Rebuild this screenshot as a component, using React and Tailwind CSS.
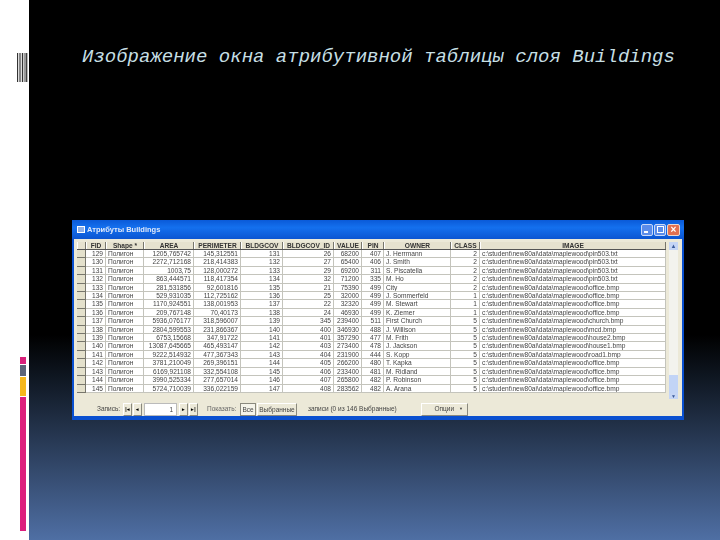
const rows = [
  [129, "1205,765742", "145,312551", 131, 26, 68200, 407, "J. Herrmann", 2, "pin503.txt"],
  [130, "2272,712168", "218,414383", 132, 27, 65400, 406, "J. Smith", 2, "pin503.txt"],
  [131, "1003,75", "128,000272", 133, 29, 69200, 311, "S. Piscatella", 2, "pin503.txt"],
  [132, "863,444571", "118,417354", 134, 32, 71200, 335, "M. Ho", 2, "pin503.txt"],
  [133, "281,531856", "92,601816", 135, 21, 75390, 499, "City", 2, "office.bmp"],
  [134, "529,931035", "112,725162", 136, 25, 32000, 499, "J. Sommerfeld", 1, "office.bmp"],
  [135, "1170,924551", "138,001953", 137, 22, 32320, 499, "M. Stewart", 1, "office.bmp"],
  [136, "209,767148", "70,40173", 138, 24, 46930, 499, "K. Ziemer", 1, "office.bmp"],
  [137, "5936,076177", "318,596007", 139, 345, 239400, 511, "First Church", 5, "church.bmp"],
  [138, "2804,599553", "231,866367", 140, 400, 346930, 488, "J. Willison", 5, "mcd.bmp"],
  [139, "6753,15668", "347,91722", 141, 401, 357290, 477, "M. Frith", 5, "house2.bmp"],
  [140, "13087,645665", "465,493147", 142, 403, 273400, 478, "J. Jackson", 5, "house1.bmp"],
  [141, "9222,514932", "477,367343", 143, 404, 231900, 444, "S. Kopp", 5, "road1.bmp"],
  [142, "3781,210049", "269,396151", 144, 405, 266200, 480, "T. Kapka", 5, "office.bmp"],
  [143, "6169,921108", "332,554108", 145, 406, 233400, 481, "M. Ridland", 5, "office.bmp"],
  [144, "3990,525334", "277,657014", 146, 407, 265800, 482, "P. Robinson", 5, "office.bmp"],
  [145, "5724,710039", "336,022159", 147, 408, 283562, 482, "A. Arana", 5, "office.bmp"],
];

const cols = "grid-cols-[9px_20px_38px_50px_47px_42px_51px_28px_22px_67px_29px_186px]";
const headers = ["", "FID", "Shape *", "AREA", "PERIMETER", "BLDGCOV", "BLDGCOV_ID", "VALUE", "PIN", "OWNER", "CLASS", "IMAGE"];

function Nav({ children }) {
  return (
    <div className="w-[9px] h-[13px] flex items-center justify-center bg-[#ece9d8] border border-t-white border-l-white border-r-[#8a897e] border-b-[#8a897e] text-[5px] font-bold text-black leading-none">
      {children}
    </div>
  );
}

function Cell({ children, left }) {
  return (
    <div className={`border-r border-b border-[#c4c4bc] overflow-hidden whitespace-nowrap px-[2px] leading-[8px] text-[6.6px] text-[#444] ${left ? "text-left" : "text-right"}`}>
      {children}
    </div>
  );
}

export default function App() {
  return (
    <div className="w-[720px] h-[540px] flex overflow-hidden font-['Liberation_Sans',sans-serif]">
      <div className="w-[29px] h-full bg-white flex flex-col items-end pr-[1px] pt-[53px]">
        <div className="w-[11px] h-[29px] flex bg-[#d8d8d8]">
          <div className="w-[1px] bg-[#333]" />
          <div className="w-[1px] bg-[#ddd]" />
          <div className="w-[2px] bg-[#888]" />
          <div className="w-[1px] bg-[#ddd]" />
          <div className="w-[1px] bg-[#333]" />
          <div className="w-[1px] bg-[#ccc]" />
          <div className="w-[2px] bg-[#999]" />
          <div className="w-[1px] bg-[#444]" />
          <div className="w-[1px] bg-[#bbb]" />
        </div>
        <div className="flex flex-col w-[6px] mr-[2px] mt-[275px] gap-[1px]">
          <div className="h-[7px] bg-[#d9217b]" />
          <div className="h-[11px] bg-[#5c6478]" />
          <div className="h-[19px] bg-[#f6b81c]" />
          <div className="h-[134px] bg-[#dd1f7d]" />
        </div>
      </div>

      <div className="w-[691px] h-full flex flex-col bg-[linear-gradient(180deg,#000_0%,#000_62%,#0f1722_70%,#4f6fa4_100%)] pl-[43px]">
        <div className="h-[220px] pt-[45px] pl-[10px]">
          <h1 className="text-[19px] leading-[24px] italic font-normal whitespace-nowrap text-[#c6dfe4] font-['Liberation_Mono',monospace]">
            Изображение окна атрибутивной таблицы слоя Buildings
          </h1>
        </div>

        <div className="w-[612px] h-[200px] flex flex-col bg-[#0a50d0] rounded-t-[2px] blur-[0.45px]">
          <div className="h-[19px] flex items-center pl-[5px] pr-[4px] bg-[linear-gradient(180deg,#0a5ad8_0%,#1470ee_40%,#0b55d2_100%)]">
            <div className="w-[8px] h-[7px] border border-white bg-[#8fb0e8] mr-[2px]" />
            <span className="text-[7.5px] font-bold text-[#dfe8fa]">Атрибуты Buildings</span>
            <div className="ml-auto flex gap-[1px]">
              <div className="w-[12px] h-[12px] rounded-[2px] bg-[#5a8cea] border border-[#c8d8f8] flex items-end pl-[2px] pb-[2px]">
                <div className="w-[4px] h-[2px] bg-white" />
              </div>
              <div className="w-[12px] h-[12px] rounded-[2px] bg-[#5a8cea] border border-[#c8d8f8] flex items-center justify-center">
                <div className="w-[7px] h-[7px] border border-white" />
              </div>
              <div className="w-[13px] h-[12px] rounded-[2px] bg-[#e2704f] border border-[#e8d8d0] flex items-center justify-center text-[10px] leading-none font-bold text-white">
                ×
              </div>
            </div>
          </div>

          <div className="w-[608px] h-[177px] mx-[2px] bg-[#ece9d8] flex flex-col pt-[3px] pl-[3px]">
            <div className="h-[151px] flex">
              <div className="w-[589px]">
                <div className={`grid ${cols} h-[8px] border-b border-[#555]`}>
                  {headers.map((h, i) => (
                    <div key={i} className="bg-[#e6e2cf] border-r border-[#77766c] border-l border-l-white text-center text-[6.6px] font-bold leading-[8px] text-[#333] whitespace-nowrap overflow-hidden">
                      {h}
                    </div>
                  ))}
                </div>
                <div className="bg-white">
                  {rows.map((r) => (
                    <div key={r[0]} className={`grid ${cols} h-[8.41px]`}>
                      <div className="bg-[#e4e1cc] border-r border-b border-[#77766c]" />
                      <Cell>{r[0]}</Cell>
                      <Cell left>Полигон</Cell>
                      <Cell>{r[1]}</Cell>
                      <Cell>{r[2]}</Cell>
                      <Cell>{r[3]}</Cell>
                      <Cell>{r[4]}</Cell>
                      <Cell>{r[5]}</Cell>
                      <Cell>{r[6]}</Cell>
                      <Cell left>{r[7]}</Cell>
                      <Cell>{r[8]}</Cell>
                      <Cell left>{`c:\\student\\new80ai\\data\\maplewood\\${r[9]}`}</Cell>
                    </div>
                  ))}
                </div>
              </div>
              <div className="w-[9px] h-[157px] ml-[3px] bg-[#f3f3ee] flex flex-col">
                <div className="h-[8px] bg-[#c5d5f5] flex items-center justify-center text-[6px] leading-none text-[#3a5a9a]">▲</div>
                <div className="flex-1" />
                <div className="h-[18px] bg-[#c2d4f6]" />
                <div className="h-[6px] bg-[#c5d5f5] flex items-center justify-center text-[5px] leading-none text-[#3a5a9a]">▼</div>
              </div>
            </div>

            <div className="h-[23px] flex items-center pl-[20px] pt-[9px] text-[6.5px] text-[#444] whitespace-nowrap">
              <span className="w-[26px]">Запись:</span>
              <div className="flex gap-[1px]">
                <Nav>|◂</Nav>
                <Nav>◂</Nav>
              </div>
              <div className="w-[33px] h-[13px] mx-[2px] bg-white border border-[#bbb] text-right pr-[3px] leading-[12px]">1</div>
              <div className="flex gap-[1px]">
                <Nav>▸</Nav>
                <Nav>▸|</Nav>
              </div>
              <span className="ml-[9px] w-[33px] text-[#666]">Показать:</span>
              <div className="w-[16px] h-[13px] bg-[#f5f4ea] border border-[#8a897e] text-center leading-[12px]">Все</div>
              <div className="w-[40px] h-[13px] ml-[1px] bg-[#ece9d8] border border-t-white border-l-white border-r-[#8a897e] border-b-[#8a897e] text-center leading-[12px]">Выбранные</div>
              <span className="ml-[11px] w-[113px]">записи (0 из 146 Выбранные)</span>
              <div className="w-[47px] h-[13px] bg-[#ece9d8] border border-t-white border-l-white border-r-[#8a897e] border-b-[#8a897e] flex items-center justify-end pr-[4px] gap-[5px] leading-none">
                <span>Опции</span>
                <span className="text-[4px]">▼</span>
              </div>
            </div>
          </div>
        </div>
      </div>
    </div>
  );
}
